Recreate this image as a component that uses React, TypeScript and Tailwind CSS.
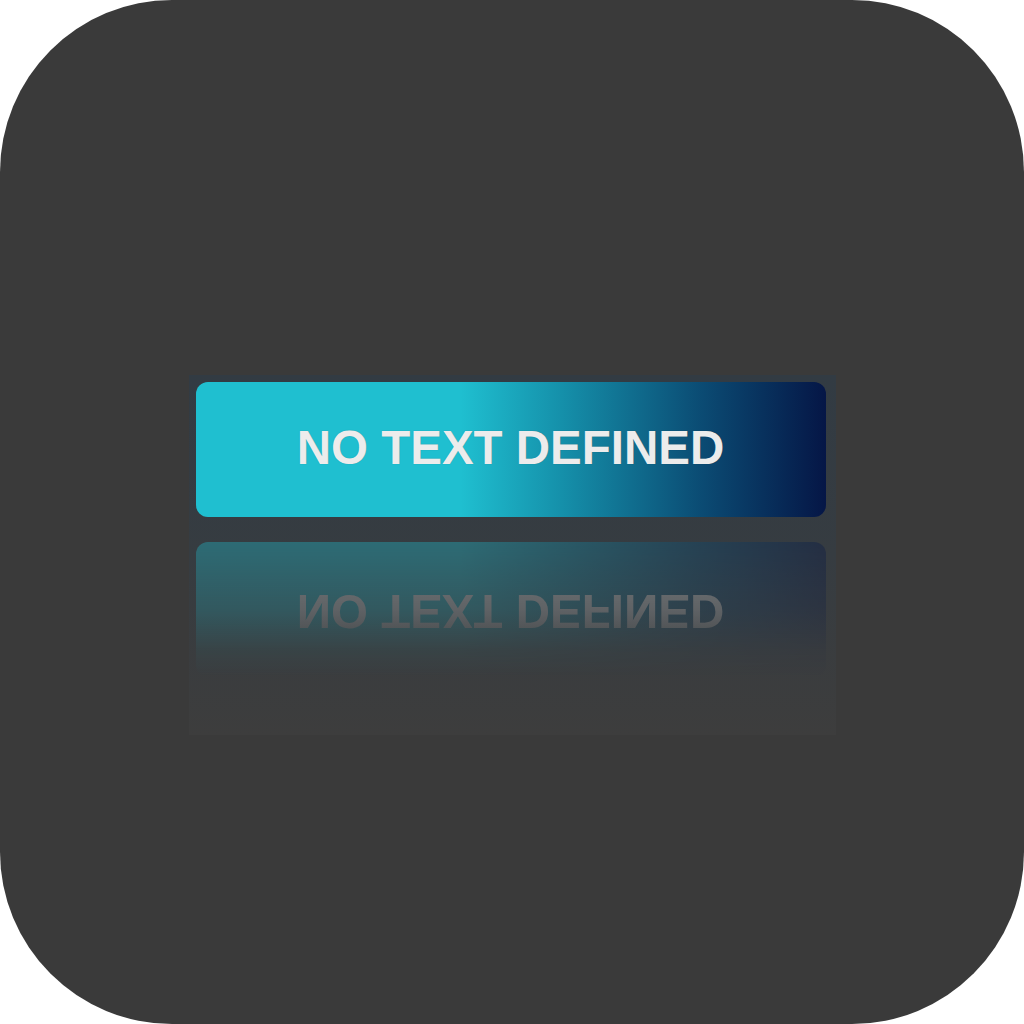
export default function App() {
    const label = "NO TEXT DEFINED";

    return (
        <div className="w-[1024px] h-[1024px] bg-white">
            <div className="w-full h-full rounded-[172px] bg-[#3a3a3a] flex flex-col items-center pt-[375px]">
                <div className="w-[647px] h-[360px] pl-[7px] pt-[7px] bg-gradient-to-b from-[#323b43] via-[#363c41] to-[#3d3d3d]">
                    <div className="w-[630px] h-[135px] pb-[4px] rounded-[12px] flex items-center justify-center bg-[linear-gradient(to_right,#1fbfd0_0%,#1fbfd0_42%,#1590aa_58%,#0b4c74_80%,#051646_100%)]">
                        <span className="font-['Liberation_Sans',Arial,sans-serif] font-bold text-[47.5px] leading-none text-[#ececec] [text-shadow:0_0_1px_rgba(0,0,0,0.25)]">
                            {label}
                        </span>
                    </div>

                    {/* reflection */}
                    <div className="w-[630px] mt-[25px] opacity-[0.36] [mask-image:linear-gradient(to_bottom,black_0%,rgba(0,0,0,0.6)_50%,rgba(0,0,0,0.15)_80%,transparent_100%)]">
                        <div className="h-[135px] pb-[4px] rounded-[12px] flex items-center justify-center scale-y-[-1] bg-[linear-gradient(to_right,#1fbfd0_0%,#1fbfd0_42%,#1590aa_58%,#0b4c74_80%,#051646_100%)]">
                            <span className="font-['Liberation_Sans',Arial,sans-serif] font-bold text-[47.5px] leading-none text-[#ececec]">
                                {label}
                            </span>
                        </div>
                    </div>
                </div>
            </div>
        </div>
    )
}
